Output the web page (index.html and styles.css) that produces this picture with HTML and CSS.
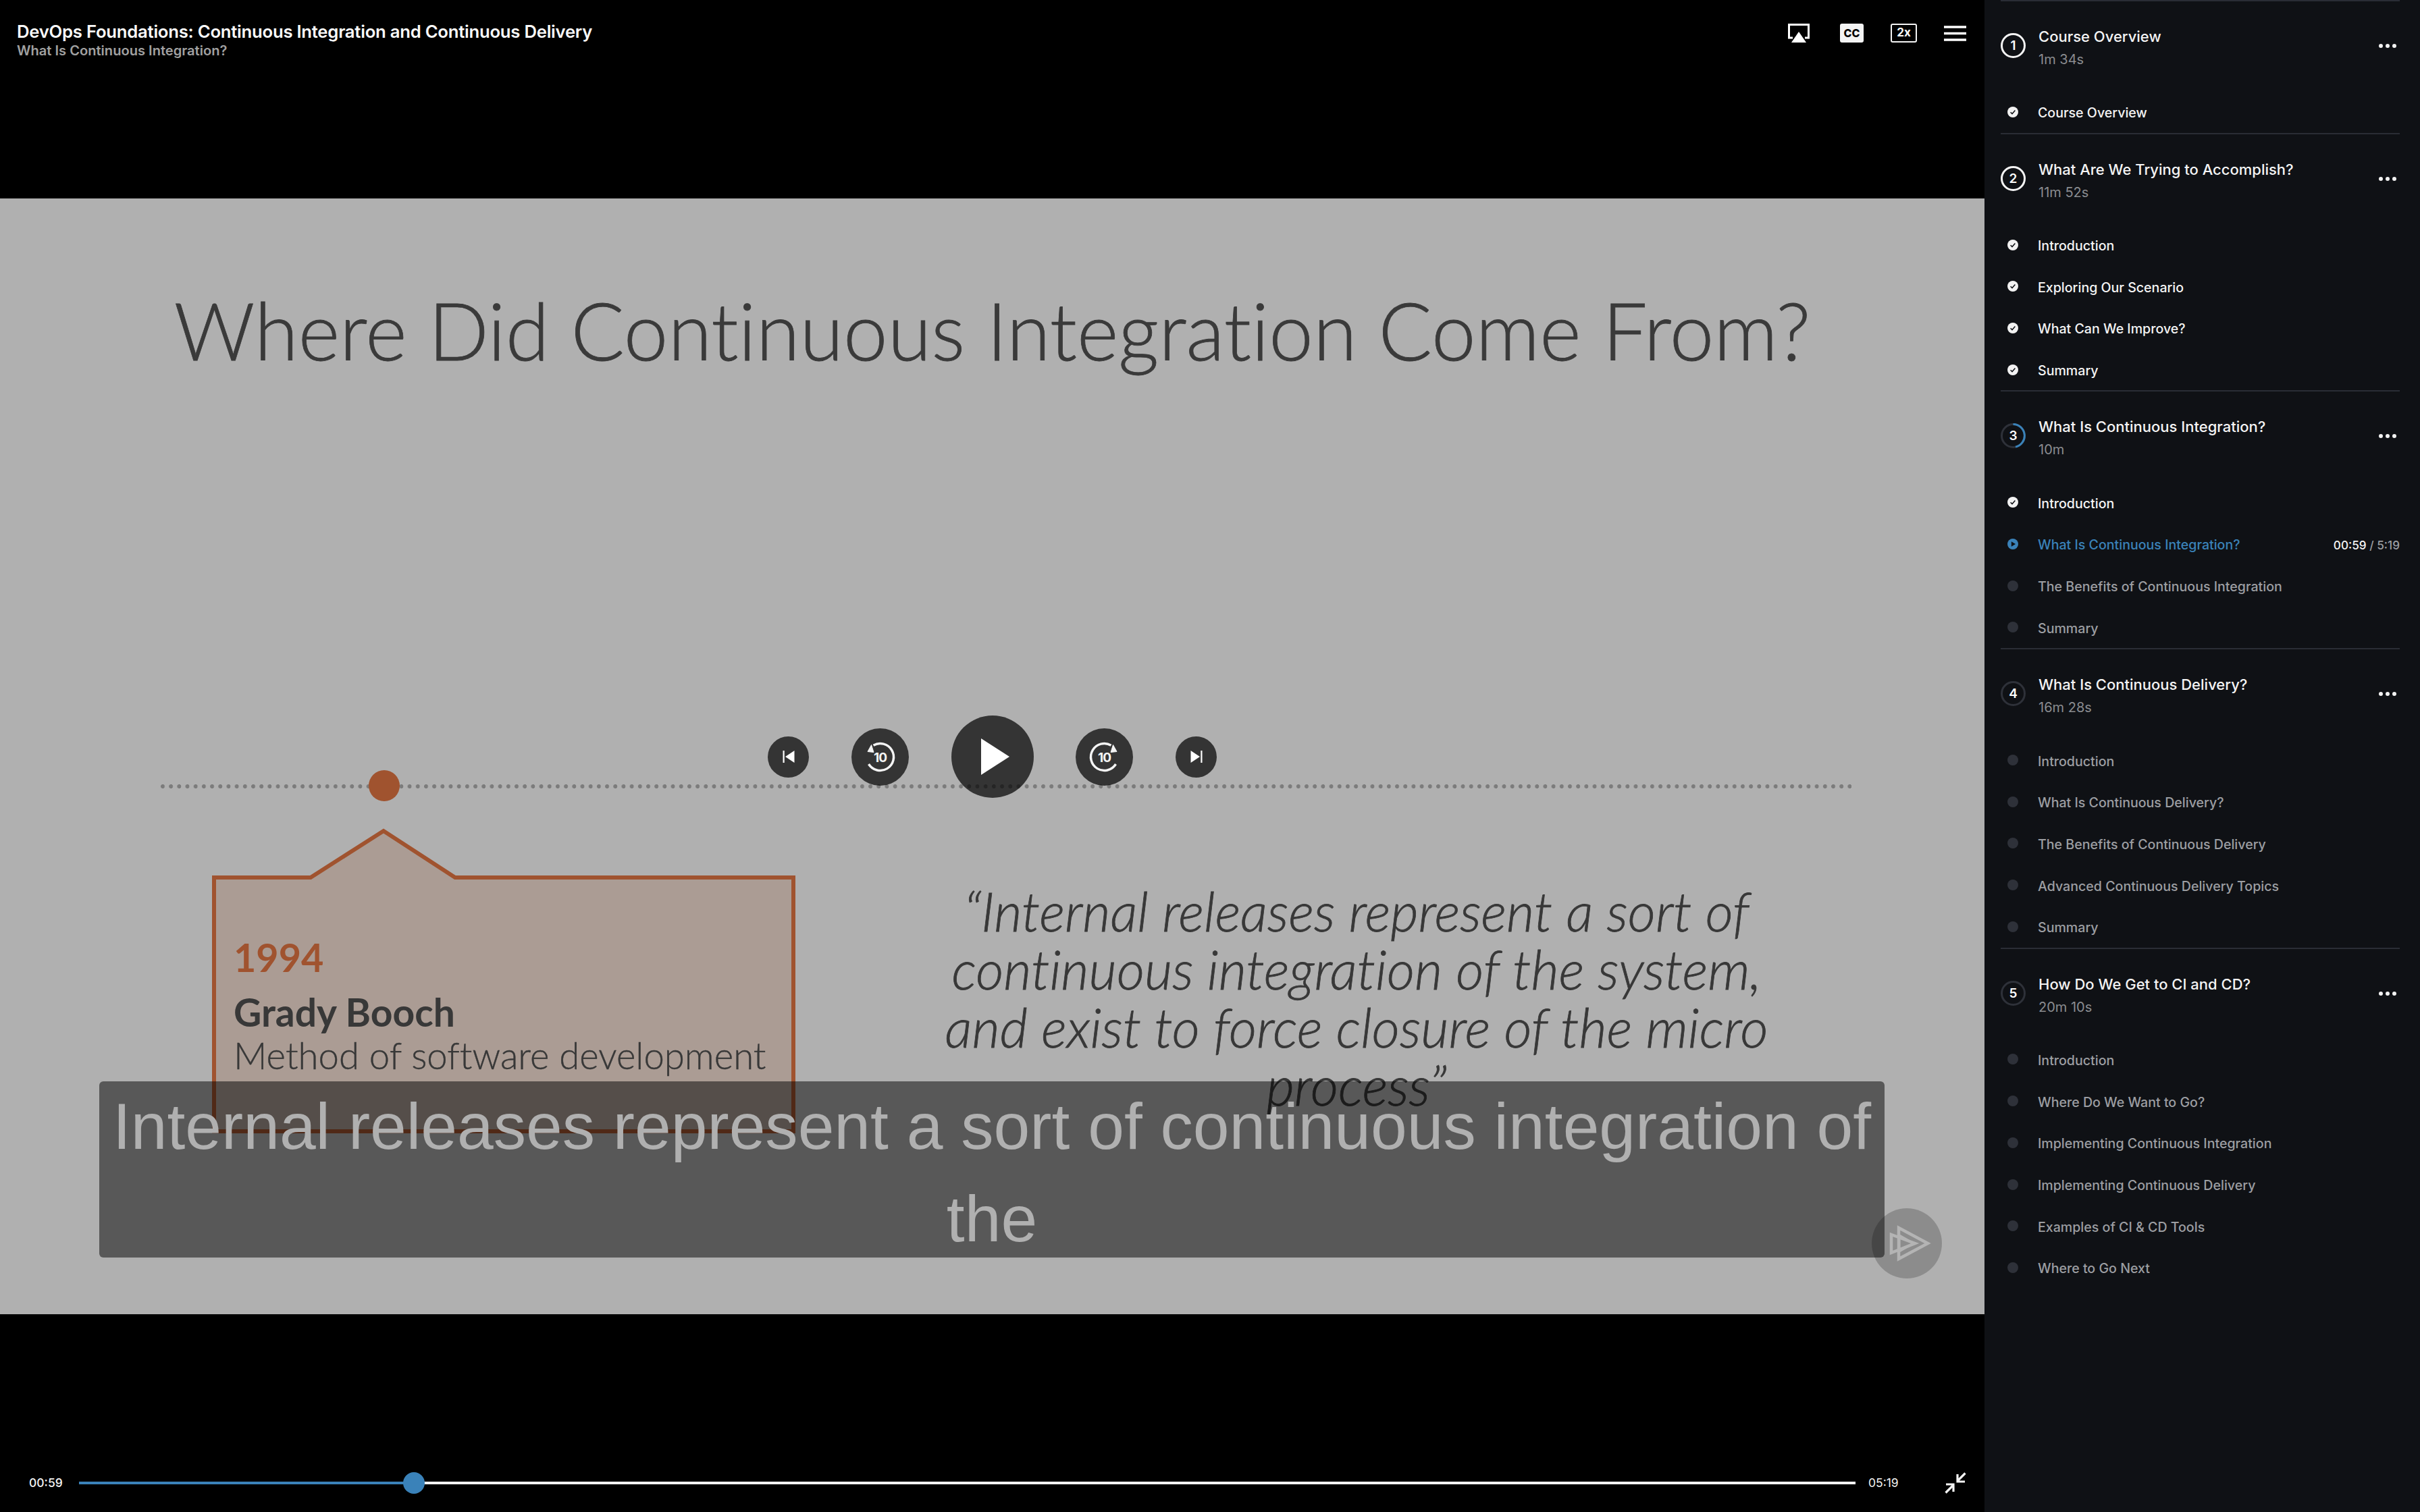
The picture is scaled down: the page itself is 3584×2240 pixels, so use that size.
FILE: index.html
```html
<!DOCTYPE html>
<html lang="en">
<head>
<meta charset="utf-8">
<title>DevOps Foundations</title>
<link rel="stylesheet" href="styles.css">
</head>
<body>
<svg class="sprites" width="0" height="0" aria-hidden="true">
  <symbol id="done" viewBox="0 0 16 16"><circle cx="8" cy="8" r="8" fill="#f2f2f2"/><path d="M4.6 8.2 7 10.6 11.4 5.6" fill="none" stroke="#0f1115" stroke-width="1.5"/></symbol>
  <symbol id="todo" viewBox="0 0 16 16"><circle cx="8" cy="8" r="8" fill="#2e3139"/></symbol>
  <symbol id="now" viewBox="0 0 16 16"><circle cx="8" cy="8" r="8" fill="#3a82b9"/><path d="M5.8 4.2 12 8 5.8 11.8Z" fill="#0f1115"/></symbol>
  <symbol id="more" viewBox="0 0 26 6"><circle cx="3" cy="3" r="3" fill="#f2f2f2"/><circle cx="13" cy="3" r="3" fill="#f2f2f2"/><circle cx="23" cy="3" r="3" fill="#f2f2f2"/></symbol>
</svg>
<div class="app">
  <main class="stage">
    <header class="topbar">
      <div class="heading">
        <div class="course">DevOps Foundations: Continuous Integration and Continuous Delivery</div>
        <div class="clip">What Is Continuous Integration?</div>
      </div>
      <div class="tools">
        <svg class="tool-air" width="32" height="28" viewBox="0 0 32 28"><path d="M7 21H1.500V1.500h29V21H25" fill="none" stroke="#fff" stroke-width="3"/><path d="M16 12 27 28H5Z" fill="#fff"/></svg>
        <div class="tool-cc">CC</div>
        <div class="tool-speed">2x</div>
        <svg class="tool-menu" width="33" height="23" viewBox="0 0 33 23"><path d="M0 2h33M0 11.500h33M0 21h33" stroke="#fff" stroke-width="3.400"/></svg>
      </div>
    </header>

    <section class="slide">
      <h1 class="slide-title">Where Did Continuous Integration Come From?</h1>
      <div class="timeline"><span class="marker"></span></div>
      <div class="slide-body">
        <div class="callout">
          <svg class="callout-shape" width="864" height="452" viewBox="0 0 864 452"><path d="M3 73H146L254 4 360 73H861V449H3Z" fill="#ab9c94" stroke="#a0532f" stroke-width="6"/></svg>
          <div class="year">1994</div>
          <div class="person">Grady Booch</div>
          <div class="method">Method of software development</div>
        </div>
        <blockquote class="quote">“Internal releases represent a sort of<br>continuous integration of the system,<br>and exist to force closure of the micro<br>process”</blockquote>
      </div>

      <div class="controls">
        <button class="ctl ctl-s"><svg width="20" height="20" viewBox="0 0 20 20"><path d="M1.500 1v18h2.200V1ZM18.500 1v18L5 10Z" fill="#fff"/></svg></button>
        <button class="ctl ctl-m"><svg width="85" height="85" viewBox="0 0 85 85"><path d="M32.500 25.200A20 20 0 1 1 25.500 53" fill="none" stroke="#f4f4f4" stroke-width="3.500"/><path d="M24 34.500 29.500 24.500 33 35.500Z" fill="#f4f4f4" stroke="#f4f4f4" stroke-width="1"/><text class="ten" x="42.500" y="49.500">10</text></svg></button>
        <button class="ctl ctl-l"><svg width="42" height="54" viewBox="0 0 42 54"><path d="M0 0 42 27 0 54Z" fill="#fff"/></svg></button>
        <button class="ctl ctl-m"><svg width="85" height="85" viewBox="0 0 85 85"><path d="M52.500 25.200A20 20 0 1 0 59.500 53" fill="none" stroke="#f4f4f4" stroke-width="3.500"/><path d="M61 34.500 55.500 24.500 52 35.500Z" fill="#f4f4f4" stroke="#f4f4f4" stroke-width="1"/><text class="ten" x="42.500" y="49.500">10</text></svg></button>
        <button class="ctl ctl-s"><svg width="20" height="20" viewBox="0 0 20 20"><path d="M18.500 1v18h-2.200V1ZM1.500 1v18L15 10Z" fill="#fff"/></svg></button>
      </div>

      <div class="caption"><div class="caption-text">Internal releases represent a sort of continuous integration of the</div></div>

      <div class="brand"><svg width="104" height="104" viewBox="0 0 104 104"><circle cx="52" cy="52" r="52" fill="#000" fill-opacity=".2"/><path d="M40 29 83 52 40 75ZM29 39 64 52 29 66Z" fill="none" stroke="#b4b4b4" stroke-width="4.500"/><path d="M41 40 62 52 41 64Z" fill="none" stroke="#b4b4b4" stroke-width="3"/></svg></div>
    </section>

    <footer class="seekbar">
      <div class="seek-row">
        <span class="time time-now">00:59</span>
        <div class="track"><div class="track-fill" style="width:495px"></div><span class="thumb"></span></div>
        <span class="time time-end">05:19</span>
        <svg class="collapse" width="32" height="32" viewBox="0 0 32 32"><path d="M30.500 1.500 20 12M19 3v11h11M1.500 30.500 12 20M13 29V18H2" fill="none" stroke="#f2f2f2" stroke-width="3.200"/></svg>
      </div>
    </footer>
  </main>

  <aside class="toc">
    <section class="module">
      <div class="module-head">
        <span class="ring ring-done">1</span>
        <div class="module-text"><div class="module-title">Course Overview</div><div class="module-time">1m 34s</div></div>
        <svg class="more" width="26" height="6"><use href="#more"/></svg>
      </div>
      <div class="item item-seen"><svg class="dot"><use href="#done"/></svg><span class="item-name">Course Overview</span></div>
    </section>

    <section class="module">
      <div class="module-head">
        <span class="ring ring-done">2</span>
        <div class="module-text"><div class="module-title">What Are We Trying to Accomplish?</div><div class="module-time">11m 52s</div></div>
        <svg class="more" width="26" height="6"><use href="#more"/></svg>
      </div>
      <div class="item item-seen"><svg class="dot"><use href="#done"/></svg><span class="item-name">Introduction</span></div>
      <div class="item item-seen"><svg class="dot"><use href="#done"/></svg><span class="item-name">Exploring Our Scenario</span></div>
      <div class="item item-seen"><svg class="dot"><use href="#done"/></svg><span class="item-name">What Can We Improve?</span></div>
      <div class="item item-seen"><svg class="dot"><use href="#done"/></svg><span class="item-name">Summary</span></div>
    </section>

    <section class="module">
      <div class="module-head">
        <span class="ring ring-active"><svg class="arc" width="37" height="37" viewBox="0 0 37 37"><path d="M18.500 1.500A17 17 0 0 1 22 35.100" fill="none" stroke="#3a82b9" stroke-width="3"/></svg>3</span>
        <div class="module-text"><div class="module-title">What Is Continuous Integration?</div><div class="module-time">10m</div></div>
        <svg class="more" width="26" height="6"><use href="#more"/></svg>
      </div>
      <div class="item item-seen"><svg class="dot"><use href="#done"/></svg><span class="item-name">Introduction</span></div>
      <div class="item item-now"><svg class="dot"><use href="#now"/></svg><span class="item-name">What Is Continuous Integration?</span><span class="progress"><b>00:59</b> / 5:19</span></div>
      <div class="item"><svg class="dot"><use href="#todo"/></svg><span class="item-name">The Benefits of Continuous Integration</span></div>
      <div class="item"><svg class="dot"><use href="#todo"/></svg><span class="item-name">Summary</span></div>
    </section>

    <section class="module">
      <div class="module-head">
        <span class="ring">4</span>
        <div class="module-text"><div class="module-title">What Is Continuous Delivery?</div><div class="module-time">16m 28s</div></div>
        <svg class="more" width="26" height="6"><use href="#more"/></svg>
      </div>
      <div class="item"><svg class="dot"><use href="#todo"/></svg><span class="item-name">Introduction</span></div>
      <div class="item"><svg class="dot"><use href="#todo"/></svg><span class="item-name">What Is Continuous Delivery?</span></div>
      <div class="item"><svg class="dot"><use href="#todo"/></svg><span class="item-name">The Benefits of Continuous Delivery</span></div>
      <div class="item"><svg class="dot"><use href="#todo"/></svg><span class="item-name">Advanced Continuous Delivery Topics</span></div>
      <div class="item"><svg class="dot"><use href="#todo"/></svg><span class="item-name">Summary</span></div>
    </section>

    <section class="module">
      <div class="module-head">
        <span class="ring">5</span>
        <div class="module-text"><div class="module-title">How Do We Get to CI and CD?</div><div class="module-time">20m 10s</div></div>
        <svg class="more" width="26" height="6"><use href="#more"/></svg>
      </div>
      <div class="item"><svg class="dot"><use href="#todo"/></svg><span class="item-name">Introduction</span></div>
      <div class="item"><svg class="dot"><use href="#todo"/></svg><span class="item-name">Where Do We Want to Go?</span></div>
      <div class="item"><svg class="dot"><use href="#todo"/></svg><span class="item-name">Implementing Continuous Integration</span></div>
      <div class="item"><svg class="dot"><use href="#todo"/></svg><span class="item-name">Implementing Continuous Delivery</span></div>
      <div class="item"><svg class="dot"><use href="#todo"/></svg><span class="item-name">Examples of CI &amp; CD Tools</span></div>
      <div class="item"><svg class="dot"><use href="#todo"/></svg><span class="item-name">Where to Go Next</span></div>
    </section>
  </aside>
</div>
</body>
</html>
```
FILE: styles.css
```css
* { box-sizing: border-box; }
html, body { margin: 0; height: 100%; background: #000; }
body { font-family: Inter, "Liberation Sans", sans-serif; color: #fff; overflow: hidden; }
.sprites { position: absolute; }
.app { display: flex; width: 3584px; height: 2240px; }

/* stage */
.stage { width: 2939px; flex: none; display: grid; grid-template-rows: 294px 1653px 293px; background: #000; }
.topbar { display: flex; justify-content: space-between; align-items: flex-start; padding: 33px 27px 0 25px; }
.course { font-size: 25.700px; font-weight: 600; line-height: 28px; letter-spacing: -.25px; color: #fafafa; }
.clip { font-size: 20.100px; font-weight: 600; line-height: 22px; margin-top: 3px; color: #a0a0a0; }
.tools { display: flex; align-items: center; margin-top: 2px; }
.tool-cc { width: 35px; height: 28px; margin: 0 40px 0 45px; background: #f4f4f4; color: #000; border-radius: 3px; font-size: 16px; font-weight: 800; line-height: 28px; text-align: center; }
.tool-speed { width: 39px; height: 28px; margin-right: 40px; border: 2.500px solid #f4f4f4; border-radius: 3px; font-size: 17px; font-weight: 700; line-height: 23px; text-align: center; }

/* slide */
.slide { position: relative; display: flex; flex-direction: column; background: #b0b0b0; color: #383838; font-family: Lato, sans-serif; font-variant-ligatures: none; overflow: hidden; }
.slide-title { margin: 125px 0 0 0; height: 142px; font-size: 117.600px; line-height: 140px; font-weight: 300; text-align: center; white-space: nowrap; color: #3a3a3a; -webkit-text-stroke: .8px #3a3a3a; }
.timeline { position: relative; margin: 601px 197px 0 238px; height: 6px; background: radial-gradient(circle at 3px 3px, #7c7c7c 2.800px, transparent 3.200px) 0 0 / 12.200px 6px repeat-x; }
.marker { position: absolute; left: 308px; top: -21px; width: 46px; height: 46px; border-radius: 50%; background: #a0532f; }
.slide-body { display: flex; align-items: flex-start; gap: 181px; padding: 59px 0 0 314px; }
.callout { position: relative; width: 864px; height: 452px; padding: 156px 0 0 32px; }
.callout-shape { position: absolute; left: 0; top: 0; }
.year, .person, .method { position: relative; white-space: nowrap; }
.year { font-size: 57.500px; line-height: 70px; font-weight: 700; color: #a0532f; }
.person { margin-top: 14px; font-size: 57px; line-height: 64px; font-weight: 700; }
.method { font-size: 54.500px; line-height: 64px; font-weight: 300; -webkit-text-stroke: .4px #383838; }
.quote { margin: 79px 0 0; width: 1300px; font-size: 80px; line-height: 86px; font-style: italic; font-weight: 300; text-align: center; white-space: nowrap; -webkit-text-stroke: .8px #383838; }

.controls { position: absolute; left: 1137px; top: 766px; width: 665px; height: 122px; display: flex; align-items: center; justify-content: space-between; }
.ctl { padding: 0; border: 0; border-radius: 50%; display: flex; align-items: center; justify-content: center; background: rgba(0,0,0,.7); }
.ctl-s { width: 61px; height: 61px; }
.ctl-m { width: 85px; height: 85px; }
.ctl-l { width: 122px; height: 122px; padding-left: 8px; }
.ten { font-family: Inter, sans-serif; font-size: 19px; font-weight: 700; text-anchor: middle; fill: #f4f4f4; letter-spacing: -1px; }

.caption { position: absolute; left: 147px; top: 1308px; width: 2644px; height: 261px; padding: 0 4px; background: rgba(0,0,0,.5); border-radius: 6px; color: #b0b0b0; font-family: "Liberation Sans", Arial, sans-serif; font-size: 96.600px; line-height: 137px; text-align: center; }
.caption-text { margin-top: -2px; }
.brand { position: absolute; left: 2772px; top: 1496px; width: 104px; height: 104px; }

/* seekbar */
.seekbar { display: flex; align-items: flex-end; padding: 0 27px 27px 43px; }
.seek-row { flex: 1; display: flex; align-items: center; height: 32px; }
.time { font-size: 17.500px; line-height: 24px; font-weight: 500; color: #f2f2f2; }
.time-now { width: 74px; flex: none; }
.time-end { width: 132px; flex: none; padding-left: 19px; font-weight: 400; }
.track { position: relative; flex: 1; height: 4px; background: #f5f5f5; }
.track-fill { height: 100%; background: #3a82b9; }
.thumb { position: absolute; left: 480px; top: -14px; width: 32px; height: 32px; border-radius: 50%; background: #3a82b9; }
.collapse { flex: none; }

/* sidebar */
.toc { flex: 1; background: #0f1115; padding: 0 30px 0 24px; overflow: hidden; }
.module { border-top: 2px solid #2a2d35; }
.module-head { height: 133px; display: flex; align-items: flex-start; padding-top: 33px; }
.ring { position: relative; flex: none; width: 37px; height: 37px; margin-top: 14px; border: 3px solid #2e3139; border-radius: 50%; display: flex; align-items: center; justify-content: center; font-size: 19px; font-weight: 600; }
.ring-done { border-color: #f4f4f4; }
.arc { position: absolute; left: -3px; top: -3px; }
.module-text { flex: 1; padding-left: 19px; }
.module-title { font-size: 22px; font-weight: 500; line-height: 38px; height: 38px; color: #f4f4f4; }
.module-time { font-size: 20px; line-height: 30px; color: #8a8c90; }
.more { flex: none; margin: 30px 5px 0 0; }
.item { display: flex; align-items: center; height: 61.700px; padding-left: 10px; font-size: 19.600px; font-weight: 500; color: #9c9ea2; }
.item-name { padding-top: 3px; }
.item-seen { color: #f4f4f4; }
.item-now { color: #3a82b9; }
.dot { flex: none; width: 16px; height: 16px; margin-right: 29px; }
.progress { margin-left: auto; padding-top: 3px; font-size: 17.200px; color: #9c9ea2; }
.progress b { font-weight: 500; color: #f4f4f4; }
```
